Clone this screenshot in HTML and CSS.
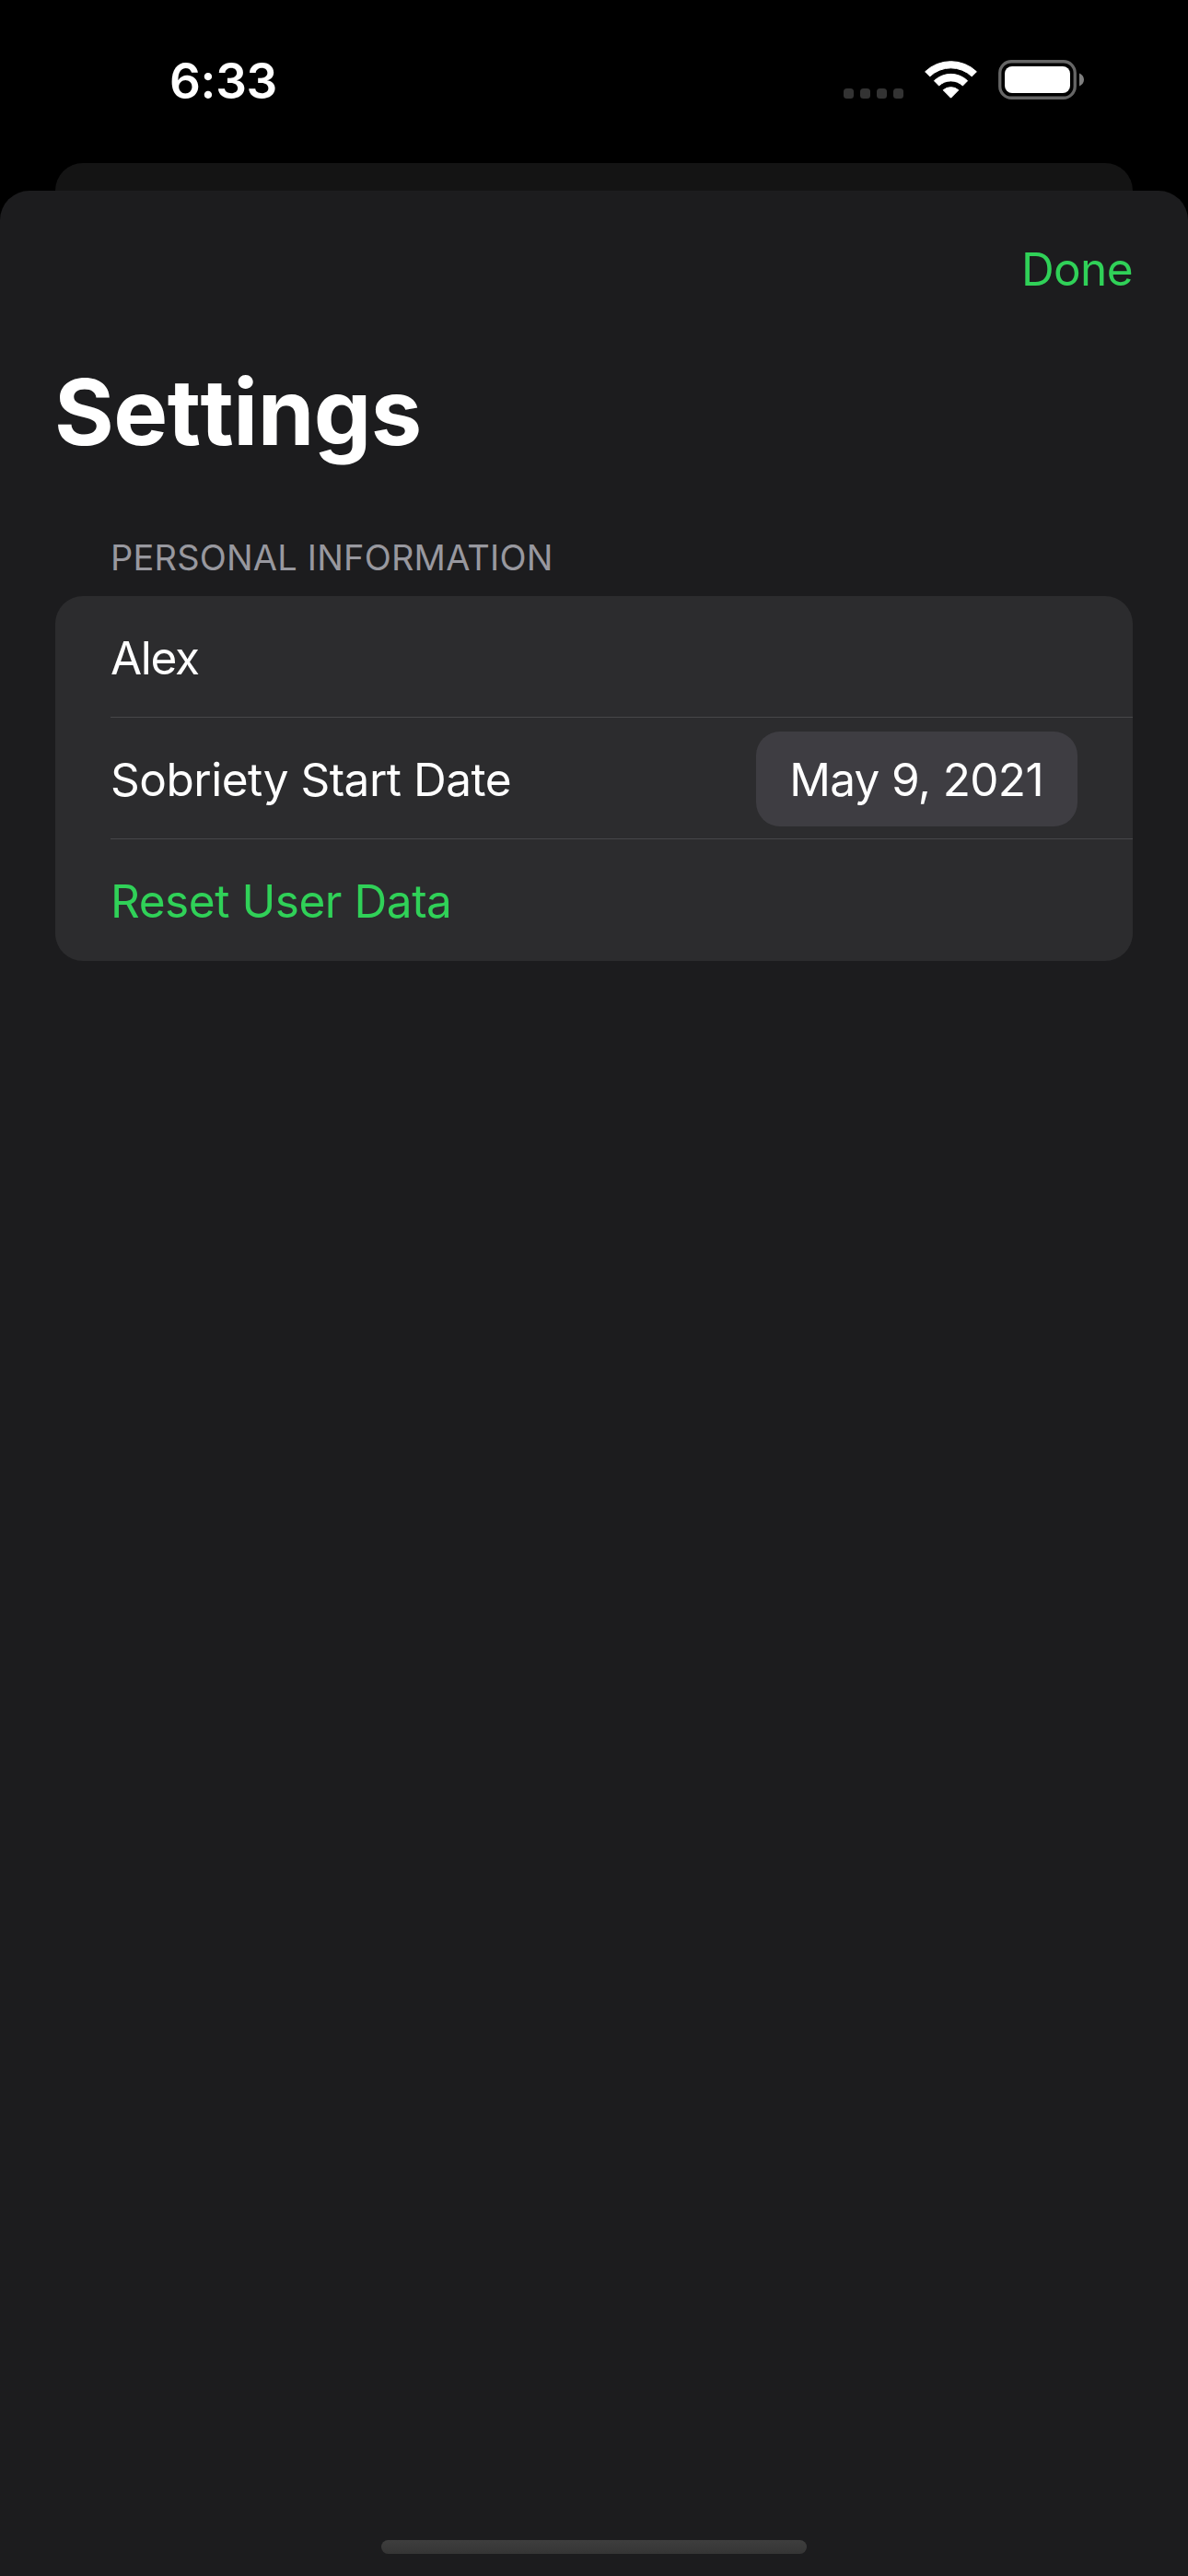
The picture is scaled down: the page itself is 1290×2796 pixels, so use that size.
FILE: index.html
```html
<!DOCTYPE html>
<html lang="en">
<head>
<meta charset="utf-8">
<title>Settings</title>
<link rel="stylesheet" href="styles.css">
</head>
<body>
<div class="screen">
  <header class="status-bar">
    <time class="clock">6:33</time>
    <div class="indicators">
      <svg class="cellular" width="65" height="11" viewBox="0 0 65 11" fill="#333">
        <rect x="0" width="11" height="11" rx="3.5"/>
        <rect x="18" width="11" height="11" rx="3.5"/>
        <rect x="36" width="11" height="11" rx="3.5"/>
        <rect x="54" width="11" height="11" rx="3.5"/>
      </svg>
      <svg class="wifi" width="58" height="42" viewBox="0 0 58 42" fill="#fff" stroke="#fff" stroke-width="1" stroke-linejoin="round">
        <path d="M0.6 12.8A40.5 40.5 0 0 1 56.4 12.8L51.3 17.9A33.2 33.2 0 0 0 5.7 17.9Z"/>
        <path d="M10.4 22.7A26 26 0 0 1 46.6 22.7L41.4 28A18.8 18.8 0 0 0 15.6 28Z"/>
        <path d="M20.2 32.8A12.5 12.5 0 0 1 36.8 32.8L28.5 41.2Z"/>
      </svg>
      <svg class="battery" width="94" height="43" viewBox="0 0 94 43">
        <rect x="1.75" y="1.75" width="81.5" height="39.5" rx="12.5" fill="none" stroke="#666" stroke-width="3.3"/>
        <rect x="7" y="7" width="71" height="29" rx="8" fill="#fff"/>
        <path d="M88 14.5C91 15.8 93 18.4 93 21.5S91 27.2 88 28.5Z" fill="#7f7f7f"/>
      </svg>
    </div>
  </header>

  <div class="backdrop-sheet"></div>

  <main class="sheet">
    <nav class="toolbar">
      <a class="done">Done</a>
    </nav>
    <h1 class="title">Settings</h1>
    <section class="group">
      <h2 class="group-header">PERSONAL INFORMATION</h2>
      <div class="list">
        <div class="row"><span class="name">Alex</span></div>
        <div class="row">
          <span class="label">Sobriety Start Date</span>
          <span class="date-pill">May 9, 2021</span>
        </div>
        <div class="row"><a class="reset">Reset User Data</a></div>
      </div>
    </section>
    <div class="home-indicator"></div>
  </main>
</div>
</body>
</html>
```
FILE: styles.css
```css
* {
  box-sizing: border-box;
}

body {
  margin: 0;
  background: #000;
  color: #fff;
  font: 400 49.5px/60px Inter, "Liberation Sans", sans-serif;
}

.screen {
  display: flex;
  flex-direction: column;
  width: 1290px;
  height: 2796px;
  overflow: hidden;
}

.status-bar {
  display: flex;
  justify-content: space-between;
  align-items: flex-start;
  height: 177px;
  padding: 58px 112px 0 184px;
}

.clock {
  font-size: 53px;
  font-weight: 600;
  letter-spacing: -0.3px;
}

.indicators {
  display: flex;
  align-items: flex-end;
  padding-top: 7px;
}

.cellular {
  margin: 0 23px 1px 0;
}

.wifi {
  margin: 0 22px 1px 0;
}

.backdrop-sheet {
  height: 30px;
  margin: 0 60px;
  border-radius: 30px 30px 0 0;
  background: #141414;
}

.sheet {
  flex: 1;
  display: flex;
  flex-direction: column;
  border-radius: 32px 32px 0 0;
  background: #1c1c1e;
}

.toolbar {
  display: flex;
  justify-content: flex-end;
  align-items: center;
  height: 170px;
  padding: 0 60px;
}

.done {
  color: #30d158;
  letter-spacing: -0.6px;
}

.title {
  margin: 0;
  padding-left: 59px;
  font-size: 99px;
  font-weight: 700;
  font-kerning: none;
  line-height: 140px;
  letter-spacing: -0.5px;
}

.group {
  padding: 64px 60px 0;
}

.group-header {
  margin: 0;
  padding: 0 60px 17px;
  color: #98989f;
  font-size: 38px;
  font-weight: 400;
  line-height: 49px;
  letter-spacing: 0.2px;
}

.list {
  border-radius: 30px;
  background: #2c2c2e;
}

.row {
  display: flex;
  justify-content: space-between;
  align-items: center;
  height: 132px;
  margin-left: 60px;
  padding-right: 60px;
  border-bottom: 1px solid #464649;
}

.row:last-child {
  border-bottom: 0;
}

.name,
.label {
  padding-top: 3px;
}

.name {
  letter-spacing: -1.3px;
}

.label {
  letter-spacing: -0.5px;
}

.reset {
  padding-top: 1px;
  color: #30d158;
  letter-spacing: -0.45px;
}

.date-pill {
  width: 349px;
  height: 103px;
  margin-top: 1px;
  padding-right: 1px;
  border-radius: 26px;
  background: #3e3d42;
  line-height: 104px;
  text-align: center;
  letter-spacing: -0.65px;
}

.home-indicator {
  width: 462px;
  height: 15px;
  margin: auto auto 24px;
  border-radius: 8px;
  background: linear-gradient(#3e3e3e, #353535);
}
```
